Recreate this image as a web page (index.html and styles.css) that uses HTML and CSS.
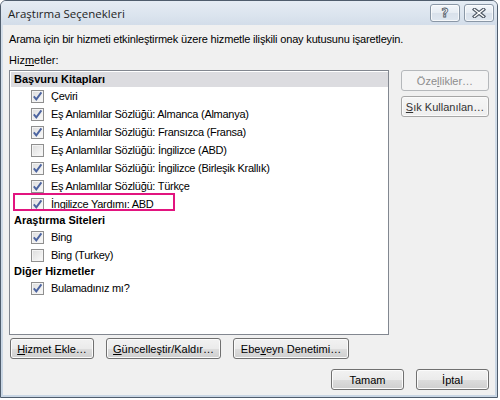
FILE: index.html
```html
<!DOCTYPE html>
<html lang="tr">
<head>
    <meta charset="UTF-8">
    <meta name="viewport" content="width=device-width, initial-scale=1.0">
    <title>Araştırma Seçenekleri</title>
    <link rel="stylesheet" href="styles.css">
</head>
<body>
    <div class="window">
        <div class="titlebar">
            <span class="title">Araştırma Seçenekleri</span>
            <div class="caption-buttons">
                <button class="cap-btn"><span class="help-glyph">?</span></button>
                <button class="cap-btn">
                    <svg width="14" height="10" viewBox="0 0 14 10">
                        <path d="M2.5 1.5 L11.5 8.5 M11.5 1.5 L2.5 8.5" stroke="#4e5865" stroke-width="3.6" stroke-linecap="square" fill="none"/>
                        <path d="M2.5 1.5 L11.5 8.5 M11.5 1.5 L2.5 8.5" stroke="#fff" stroke-width="1.4" stroke-linecap="square" fill="none"/>
                    </svg>
                </button>
            </div>
        </div>

        <div class="client">
            <p class="intro">Arama için bir hizmeti etkinleştirmek üzere hizmetle ilişkili onay kutusunu işaretleyin.</p>
            <div class="field-label">Hiz<u>m</u>etler:</div>

            <div class="services">
                <div class="service-list">
                    <div class="group selected">Başvuru Kitapları</div>
                    <div class="item"><span class="check on"></span>Çeviri</div>
                    <div class="item"><span class="check on"></span>Eş Anlamlılar Sözlüğü: Almanca (Almanya)</div>
                    <div class="item"><span class="check on"></span>Eş Anlamlılar Sözlüğü: Fransızca (Fransa)</div>
                    <div class="item"><span class="check"></span>Eş Anlamlılar Sözlüğü: İngilizce (ABD)</div>
                    <div class="item"><span class="check on"></span>Eş Anlamlılar Sözlüğü: İngilizce (Birleşik Krallık)</div>
                    <div class="item"><span class="check on"></span>Eş Anlamlılar Sözlüğü: Türkçe</div>
                    <div class="item marked"><span class="check on"></span>İngilizce Yardımı: ABD</div>

                    <div class="group">Araştırma Siteleri</div>
                    <div class="item"><span class="check on"></span>Bing</div>
                    <div class="item"><span class="check"></span>Bing (Turkey)</div>

                    <div class="group">Diğer Hizmetler</div>
                    <div class="item"><span class="check on"></span>Bulamadınız mı?</div>
                </div>

                <div class="side-buttons">
                    <button class="btn" disabled>Öze<u>l</u>likler…</button>
                    <button class="btn flat"><u>S</u>ık Kullanılan…</button>
                </div>
            </div>

            <div class="manage-buttons">
                <button class="btn add"><u>H</u>izmet Ekle…</button>
                <button class="btn update"><u>G</u>üncelleştir/Kaldır…</button>
                <button class="btn parental">Ebe<u>v</u>eyn Denetimi…</button>
            </div>

            <div class="dialog-buttons">
                <button class="btn wide">Tamam</button>
                <button class="btn wide">İptal</button>
            </div>
        </div>
    </div>

    <script>
        // tick marks for the checked boxes
        const tick = '<svg width="11" height="11" viewBox="0 0 11 11"><path d="M1.8 5.4 L4.3 8.4 L9.4 1.4" stroke="#4c64a0" stroke-width="1.9" fill="none"/></svg>';
        document.querySelectorAll('.check.on').forEach(box => {
            box.innerHTML = tick;
        });
    </script>
</body>
</html>
```

FILE: styles.css
```css
body {
    margin: 0;
    padding: 0;
    background-color: #fff;
    font-family: "Liberation Sans", Arial, sans-serif;
    font-size: 11px;
    color: #000;
}
button {
    font-family: inherit;
    font-size: 11px;
    color: #000;
    padding: 0;
}
.window {
    width: 496px;
    height: 396px;
    border: 1px solid #4f5d6d;
    border-radius: 6px 6px 0 0;
    background: linear-gradient(180deg, #d6e0eb, #c9d6e4);
    display: flex;
    flex-direction: column;
}
.titlebar {
    height: 24px;
    display: flex;
    align-items: flex-start;
    justify-content: space-between;
    background: linear-gradient(180deg, #e5ecf4 0%, #dbe4ee 60%, #d3dde9 100%);
    border-radius: 5px 5px 0 0;
}
.title {
    font-family: "Open Sans", "Liberation Sans", sans-serif;
    font-size: 11.5px;
    color: #1e1e1e;
    margin: 5px 0 0 7px;
}
.caption-buttons {
    display: flex;
    gap: 4px;
    margin: 3px 3px 0 0;
}
.cap-btn {
    width: 30px;
    height: 18px;
    border: 1px solid #8a97a6;
    border-radius: 3px;
    background: linear-gradient(180deg, #f3f6fa 0%, #e6ecf3 50%, #d9e1eb 51%, #dfe7f0 100%);
    box-shadow: inset 0 0 0 1px rgba(255, 255, 255, 0.7);
    display: flex;
    align-items: center;
    justify-content: center;
}
.help-glyph {
    font-family: "DejaVu Sans", sans-serif;
    font-weight: bold;
    font-size: 12px;
    line-height: 12px;
    color: #fff;
    -webkit-text-stroke: 0.8px #4e5865;
}
.client {
    margin: 0 2px 2px 2px;
    flex: 1;
    background-color: #f0f0f0;
    padding: 7px 6px 0 6px;
}
.intro {
    margin: 0;
    line-height: 14px;
    letter-spacing: -0.17px;
}
.field-label {
    margin-top: 7px;
    line-height: 14px;
}
.services {
    display: flex;
    gap: 12px;
    margin-top: 3px;
}
.service-list {
    width: 378px;
    height: 262px;
    border: 1px solid #828790;
    background-color: #fff;
    padding-top: 1px;
}
.group {
    height: 15px;
    line-height: 15px;
    font-weight: bold;
    padding-left: 3px;
    margin-left: 1px;
}
.group.selected {
    background-color: #dcdce0;
}
.item {
    height: 18px;
    display: flex;
    align-items: center;
    padding-left: 21px;
    letter-spacing: -0.27px;
    position: relative;
}
.item.marked::after {
    content: "";
    position: absolute;
    left: 3px;
    top: -2px;
    width: 158px;
    height: 14px;
    border: 2px solid #e2147f;
}
.check {
    width: 11px;
    height: 11px;
    border: 1px solid #8f8f8f;
    background: linear-gradient(135deg, #dcdcdc, #fbfbfb);
    box-shadow: inset 0 0 0 1px #f4f4f4;
    margin-right: 7px;
    display: flex;
}
.side-buttons {
    display: flex;
    flex-direction: column;
    gap: 5px;
}
.btn {
    height: 21px;
    border: 1px solid #707070;
    border-radius: 3px;
    background: linear-gradient(180deg, #f2f2f2 0%, #ebebeb 50%, #dddddd 51%, #cfcfcf 100%);
    box-shadow: inset 0 0 0 1px #fbfbfb;
    cursor: pointer;
}
.side-buttons .btn {
    width: 88px;
}
.btn.flat {
    border-color: #a6a6a6;
    background: linear-gradient(180deg, #f6f6f6, #eeeeee);
    color: #333;
}
.btn:disabled {
    border-color: #b5b8bb;
    background: #f4f4f4;
    box-shadow: none;
    color: #8d8d8d;
}
.manage-buttons {
    display: flex;
    gap: 12px;
    margin-top: 3px;
    padding-left: 1px;
}
.add {
    width: 84px;
}
.update {
    width: 115px;
}
.parental {
    width: 116px;
}
.dialog-buttons {
    display: flex;
    justify-content: flex-end;
    gap: 12px;
    margin-top: 10px;
}
.wide {
    width: 73px;
}
```
